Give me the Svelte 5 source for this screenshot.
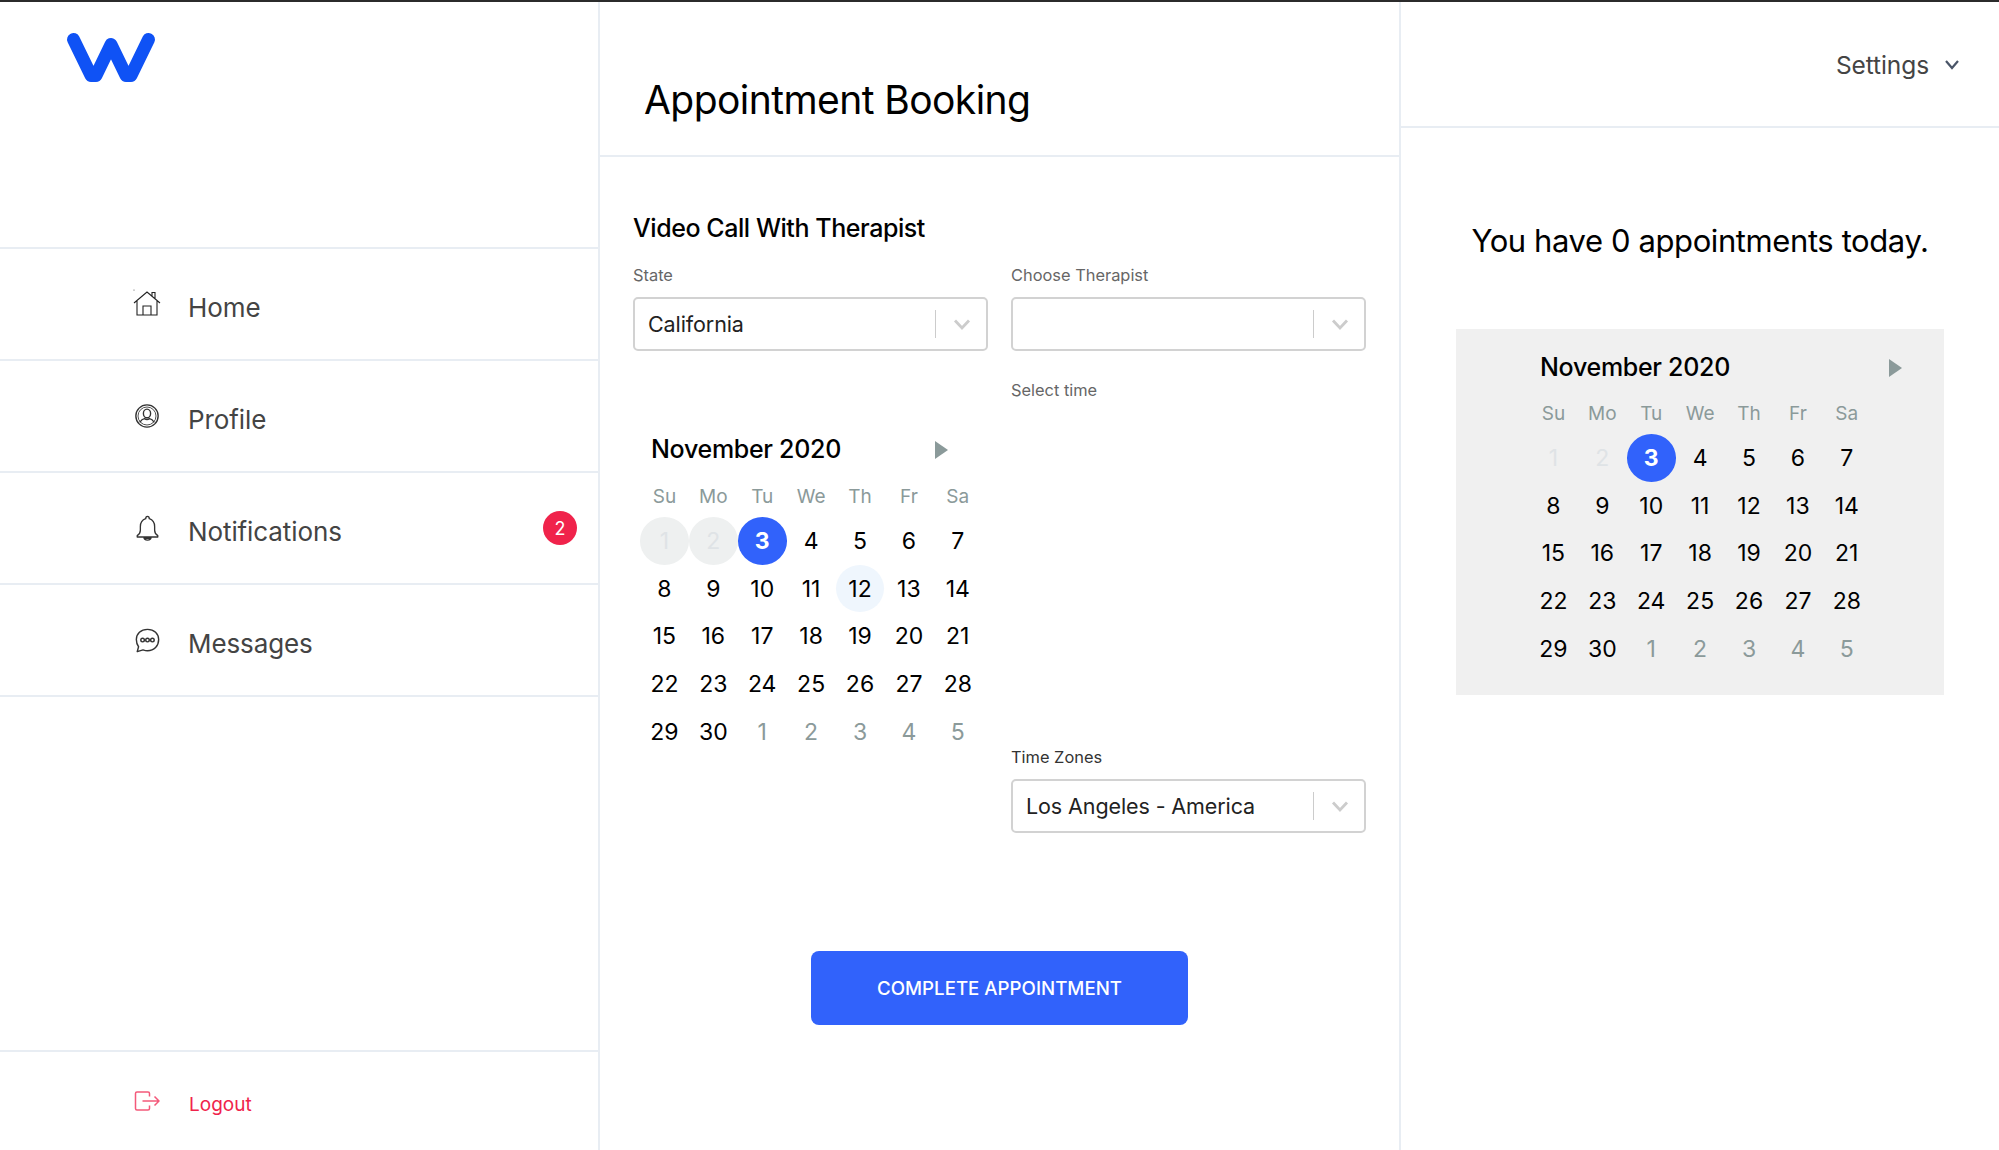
<script lang="ts">
  type Day = { n: number; kind?: string };

  const weekdays = ['Su', 'Mo', 'Tu', 'We', 'Th', 'Fr', 'Sa'];

  const days: Day[] = [];
  for (let n = 1; n <= 30; n++) days.push({ n });
  for (let n = 1; n <= 5; n++) days.push({ n, kind: 'next' });
  days[0].kind = 'past';
  days[1].kind = 'past';
  days[2].kind = 'today';
  days[11].kind = 'hover';

  // the small calendar on the right has no hover and no grey discs
  const sideDays: Day[] = days.map((d) => {
    if (d.kind === 'hover') return { n: d.n };
    if (d.kind === 'past') return { n: d.n, kind: 'faint' };
    return d;
  });

  const nav = [
    { label: 'Home', icon: 'home' },
    { label: 'Profile', icon: 'profile' },
    { label: 'Notifications', icon: 'bell', badge: 2 },
    { label: 'Messages', icon: 'chat' }
  ];
</script>

{#snippet calendar(list: Day[])}
  <div class="cal-head">
    <span class="cal-title">November 2020</span>
    <svg class="cal-next" width="13" height="18" viewBox="0 0 13 18"><path d="M0 0 L13 9 L0 18 Z" fill="#8b9a9a" /></svg>
  </div>
  <div class="cal-grid">
    {#each weekdays as w}
      <div class="wd">{w}</div>
    {/each}
    {#each list as d}
      <div class="day {d.kind ?? ''}">{d.n}</div>
    {/each}
  </div>
{/snippet}

{#snippet select(value: string)}
  <div class="select">
    <span class="select-value">{value}</span>
    <span class="select-sep"></span>
    <svg class="select-arrow" width="20" height="20" viewBox="0 0 20 20" fill="none" stroke="#cccccc" stroke-width="2.8"><path d="M3 6.5 L10 14 L17 6.5" /></svg>
  </div>
{/snippet}

<div class="topline"></div>
<div class="page">
  <aside class="side">
    <div class="logo">
      <svg width="100" height="62" viewBox="0 0 100 62" fill="none" stroke="#0f52f5" stroke-width="13" stroke-linecap="round" stroke-linejoin="round">
        <path d="M13.5 13.5 L31 49.5 H36 L51 18.5 L66 49.5 H71 L88.5 13.5" />
      </svg>
    </div>
    <nav>
      {#each nav as item}
        <a class="nav-item" href="#top">
          <span class="nav-icon">
            {#if item.icon === 'home'}
              <svg class="home-icon" width="28" height="28" viewBox="0 0 28 28" fill="none" stroke="#222" stroke-width="1.1"><path d="M1 14 L14 3 L27 14 M4 11.5 V26 H24 V11.5 M10 26 V17 H18 V26 M19 7 V3.5 H22 V10" /><circle cx="1" cy="1" r=".6" fill="#555" stroke="none" /></svg>
            {:else if item.icon === 'profile'}
              <svg width="24" height="24" viewBox="0 0 28 28" fill="none" stroke="#333" stroke-width="1.6"><circle cx="14" cy="14" r="13" /><circle cx="14" cy="14" r="10.5" stroke-width="1" /><ellipse cx="14" cy="11" rx="4.2" ry="5" /><path d="M5.5 21.5 Q8 17.5 11 17 Q14 19 17 17 Q20 17.5 22.5 21.5" /></svg>
            {:else if item.icon === 'bell'}
              <svg width="25" height="27" viewBox="0 0 28 30" fill="none" stroke="#333" stroke-width="1.5" stroke-linejoin="round"><path d="M14 1.5 Q12 1.5 12 4 Q6 6 6 13 V17 Q6 21 2.5 23 V24.5 H25.5 V23 Q22 21 22 17 V13 Q22 6 16 4 Q16 1.5 14 1.5 Z M10 24.5 Q10 28 14 28 Q18 28 18 24.5 M10.5 26 H17.5" /></svg>
            {:else}
              <svg width="25" height="25" viewBox="0 0 28 28" fill="none" stroke="#333" stroke-width="1.6" stroke-linejoin="round"><path d="M14 1.5 C6.5 1.5 1.5 6.5 1.5 13 C1.5 16.5 2.5 19 4 21 L2.5 26.5 L9 24.5 C10.5 25 12 25.5 14 25.5 C21.5 25.5 26.5 20 26.5 13 C26.5 6.5 21.5 1.5 14 1.5 Z" /><circle cx="8.5" cy="13.5" r="2" /><circle cx="14" cy="13.5" r="2" /><circle cx="19.5" cy="13.5" r="2" /></svg>
            {/if}
          </span>
          <span class="nav-label">{item.label}</span>
          {#if item.badge}<span class="badge">{item.badge}</span>{/if}
        </a>
      {/each}
    </nav>
    <div class="logout">
      <span class="nav-icon">
        <svg width="26" height="20" viewBox="0 0 26 20" fill="none" stroke="#f4597a" stroke-width="1.5" stroke-linejoin="round"><path d="M15.5 5.5 V2.5 Q15.5 1 14 1 H3 Q1.5 1 1.5 2.5 V17.5 Q1.5 19 3 19 H14 Q15.5 19 15.5 17.5 V14.5" /><path d="M8.5 10 H25 M20.5 5.5 L25 10 L20.5 14.5" /></svg>
      </span>
      <span class="logout-label">Logout</span>
    </div>
  </aside>

  <main class="center">
    <header class="center-head"><h1>Appointment Booking</h1></header>
    <section class="center-body">
      <h2>Video Call With Therapist</h2>
      <div class="form">
        <div class="col">
          <div class="label">State</div>
          {@render select('California')}
          <div class="cal-left">
            {@render calendar(days)}
          </div>
        </div>
        <div class="col">
          <div class="label">Choose Therapist</div>
          {@render select('')}
          <div class="label time-label">Select time</div>
          <div class="label zone-label">Time Zones</div>
          {@render select('Los Angeles - America')}
        </div>
      </div>
      <div class="actions">
        <button class="complete">COMPLETE APPOINTMENT</button>
      </div>
    </section>
  </main>

  <aside class="right">
    <header class="right-head">
      <span class="settings">Settings</span>
      <svg width="16" height="12" viewBox="0 0 16 12" fill="none" stroke="#4a5568" stroke-width="2.2"><path d="M2 2 L8 9 L14 2" /></svg>
    </header>
    <p class="today-msg">You have 0 appointments today.</p>
    <div class="cal-box">
      {@render calendar(sideDays)}
    </div>
  </aside>
</div>

<style>
  :global(body) {
    margin: 0;
    background: #fff;
    font-family: Inter, "Liberation Sans", sans-serif;
    color: #000;
    overflow: hidden;
  }
  .topline {
    height: 2px;
    background: #2b2b2b;
  }
  .page {
    display: grid;
    grid-template-columns: 600px 801px 598px;
    height: 1148px;
  }

  /* sidebar */
  .side {
    display: flex;
    flex-direction: column;
    border-right: 2px solid #e8edf3;
    box-sizing: border-box;
  }
  .logo {
    height: 247px;
    box-sizing: border-box;
    padding: 24px 0 0 60px;
    border-bottom: 2px solid #e8edf3;
  }
  .logo svg {
    display: block;
  }
  .nav-item {
    display: flex;
    align-items: center;
    height: 110px;
    padding: 0 21px 0 133px;
    border-bottom: 2px solid #e8edf3;
    text-decoration: none;
    color: #444;
    position: relative;
  }
  .nav-icon {
    width: 28px;
    height: 30px;
    margin-right: 27px;
    display: flex;
    align-items: center;
    justify-content: center;
  }
  .home-icon {
    margin-top: -2px;
  }
  .nav-label {
    font-size: 26px;
    letter-spacing: -0.1px;
    flex: 1;
    margin-top: 7px;
  }
  .badge {
    width: 34px;
    height: 34px;
    border-radius: 50%;
    background: #f0234b;
    color: #fff;
    font-size: 18px;
    display: flex;
    align-items: center;
    justify-content: center;
  }
  .logout {
    margin-top: auto;
    height: 100px;
    box-sizing: border-box;
    border-top: 2px solid #e8edf3;
    display: flex;
    align-items: center;
    padding: 0 0 0 133px;
  }
  .logout .nav-icon {
    margin-right: 28px;
  }
  .logout .nav-icon svg {
    flex: none;
  }
  .logout-label {
    color: #f0234b;
    font-size: 19px;
    margin-top: 6px;
  }

  /* middle column */
  .center {
    border-right: 2px solid #e8edf3;
    box-sizing: border-box;
  }
  .center-head {
    height: 155px;
    box-sizing: border-box;
    border-bottom: 2px solid #e8edf3;
    padding: 75px 0 0 44px;
  }
  h1 {
    margin: 0;
    font-size: 39px;
    line-height: 46px;
    font-weight: 400;
    letter-spacing: -0.56px;
  }
  .center-body {
    padding: 56px 33px 0;
  }
  h2 {
    margin: 0;
    font-size: 25px;
    line-height: 30px;
    font-weight: 500;
    letter-spacing: -0.44px;
  }
  .form {
    display: grid;
    grid-template-columns: 355px 355px;
    gap: 23px;
    margin-top: 21px;
  }
  .label {
    font-size: 16.4px;
    line-height: 22px;
    color: #666;
  }
  .select {
    margin-top: 11px;
    height: 54px;
    box-sizing: border-box;
    border: 2px solid #d2d2d2;
    border-radius: 5px;
    display: flex;
    align-items: center;
    padding: 0 14px 0 13px;
  }
  .select-value {
    flex: 1;
    font-size: 21.5px;
    letter-spacing: -0.1px;
    color: #222;
  }
  .select-sep {
    width: 1px;
    height: 28px;
    background: #ccc;
    margin-right: 16px;
  }
  .time-label {
    margin-top: 28px;
  }
  .zone-label {
    margin-top: 345px;
    color: #333;
  }
  .cal-left {
    width: 343px;
    margin-top: 80px;
  }

  /* calendar */
  .cal-head {
    display: flex;
    align-items: center;
    justify-content: space-between;
    padding: 0 28px 0 18px;
    height: 36px;
  }
  .cal-next {
    margin-top: 1px;
  }
  .cal-title {
    font-size: 25px;
    font-weight: 500;
    letter-spacing: -0.3px;
  }
  .cal-grid {
    display: grid;
    grid-template-columns: repeat(7, 48.9px);
    grid-template-rows: 42px repeat(5, 47.7px);
    margin: 7px 0 0 7px;
  }
  .cal-left .cal-grid {
    margin-top: 8px;
  }
  .wd {
    display: flex;
    align-items: center;
    justify-content: center;
    font-size: 19px;
    color: #8b9a9a;
  }
  .day {
    display: flex;
    align-items: center;
    justify-content: center;
    font-size: 23px;
    border-radius: 50%;
  }
  .day.next { color: #8b9a9a; }
  .day.past { background: #eef0f0; color: #dfe3e6; }
  .day.faint { color: #dfe3e6; }
  .day.today { background: #3162fb; color: #fff; font-weight: 700; }
  .day.hover { background: #eff6fd; }

  .actions {
    display: flex;
    justify-content: center;
    margin-top: 118px;
  }
  .complete {
    width: 377px;
    height: 74px;
    border: 0;
    border-radius: 8px;
    background: #3162fb;
    color: #fff;
    font-family: inherit;
    font-size: 18.7px;
    font-weight: 500;
  }

  /* right column */
  .right-head {
    height: 126px;
    box-sizing: border-box;
    border-bottom: 2px solid #e8edf3;
    display: flex;
    align-items: flex-start;
    justify-content: flex-end;
    gap: 15px;
    padding: 47px 39px 0 0;
  }
  .right-head svg {
    margin-top: 10px;
  }
  .settings {
    font-size: 24.5px;
    letter-spacing: -0.1px;
    line-height: 32px;
    color: #444;
  }
  .today-msg {
    margin: 93px 0 0;
    text-align: center;
    white-space: nowrap;
    font-size: 31px;
    letter-spacing: -0.4px;
    line-height: 40px;
  }
  .cal-box {
    margin: 68px 55px 0;
    height: 366px;
    box-sizing: border-box;
    background: #f0f0f0;
    padding: 20px 14px 0 66px;
  }
</style>
